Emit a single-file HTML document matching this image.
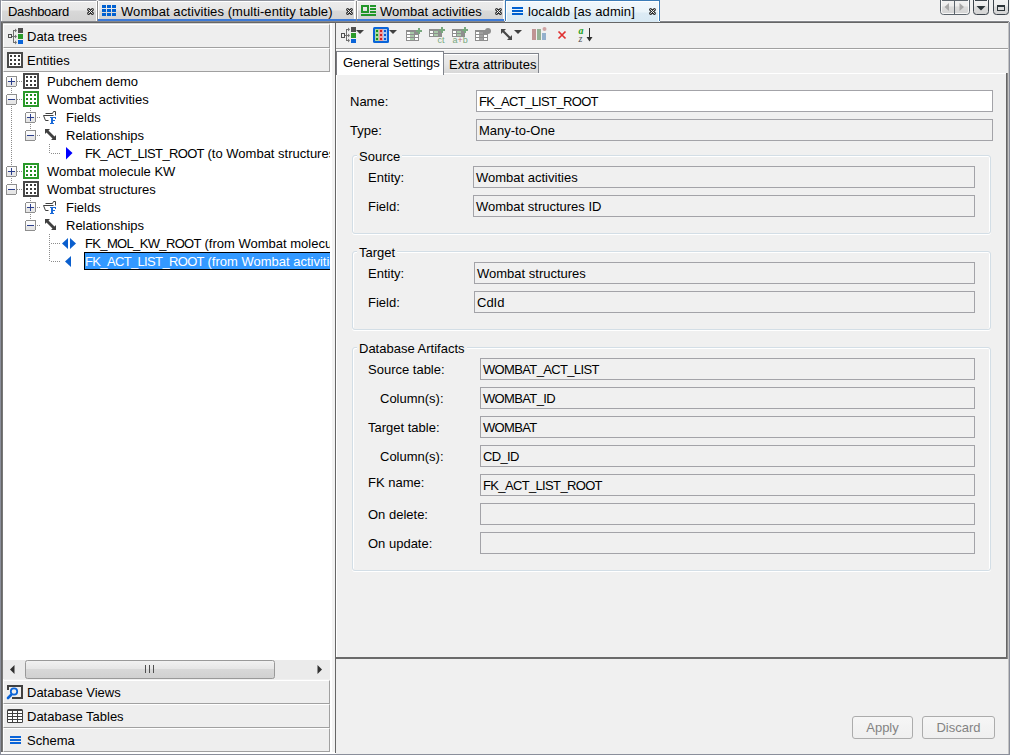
<!DOCTYPE html>
<html><head><meta charset="utf-8">
<style>
*{box-sizing:border-box}
html,body{margin:0;padding:0}
body{width:1010px;height:755px;overflow:hidden;position:relative;background:#f0f0f0;font-family:"Liberation Sans",sans-serif;font-size:13px;color:#000}
.a{position:absolute}
.t{position:absolute;line-height:13px;white-space:nowrap}
.cap{letter-spacing:-0.65px}
/* tabs */
.tab{position:absolute;top:0;height:21px;border-top:1px solid #8e929c;border-left:1px solid #fff;border-right:1px solid #fff;background:linear-gradient(#ececec 0,#e8e8e8 9px,#d8d8d8 10px,#d2d2d2 100%)}
.tab:before{content:"";position:absolute;left:0;top:0;right:0;height:1px;background:#fff}
.sep{position:absolute;top:1px;height:20px;width:1px;background:#8c8c8c}
.sepw{position:absolute;top:1px;height:20px;width:1px;background:#fff}
.uline{position:absolute;top:19px;height:2px;background:#3c7ad8}
.hdr{position:absolute;left:3px;width:327px;height:24px;background:#eeeeee;border-top:1px solid #fff;border-left:1px solid #fff;border-right:1px solid #a0a0a0;border-bottom:1px solid #a0a0a0}
.fld{position:absolute;height:22px;border:1px solid #a3a3a8;background:#f0f0f0}
.fld > span{position:absolute;left:2px;top:4px;line-height:13px;white-space:nowrap}
.grp{position:absolute;border:1px solid #d3dee6;border-radius:3px;box-shadow:inset 1px 1px 0 #fff, inset -1px 0 0 #fff, 0 1px 0 #fff}
.gt{position:absolute;background:#f0f0f0;padding:0 2px;line-height:13px}
.box{position:absolute;width:11px;height:11px;border:1px solid #8e8f8f;border-radius:2px;background:linear-gradient(#fdfdfd,#e8e8e8)}
.dh{position:absolute;height:1px;background-image:linear-gradient(90deg,#a0a0a0 50%,transparent 50%);background-size:2px 1px}
.dv{position:absolute;width:1px;background-image:linear-gradient(#a0a0a0 50%,transparent 50%);background-size:1px 2px}
.btn{position:absolute;height:23px;border:1px solid #acacac;border-radius:3px;background:linear-gradient(#f6f6f6,#efefef);color:#838383;text-align:center;line-height:21px}
</style></head><body>

<!-- ================= TAB BAR ================= -->
<div class="tab" style="left:1px;width:96px"></div>
<div class="tab" style="left:98px;width:257px"></div>
<div class="tab" style="left:357px;width:147px"></div>
<div class="a" style="left:505px;top:0;width:155px;height:22px;border:1px solid #3b7cb8;border-bottom:none;background:#fff;padding:1px 1px 0 1px"><div style="width:100%;height:100%;background:linear-gradient(#f0f7fc 0,#eaf4fa 10px,#dcebf5 11px,#d8e9f4 100%)"></div></div>
<div class="sep" style="left:97px"></div>
<div class="sep" style="left:356px"></div>
<div class="uline" style="left:98px;width:258px"></div>
<div class="uline" style="left:357px;width:147px"></div>
<div class="a" style="left:660px;top:20px;width:349px;height:1px;background:#f8f8f8"></div>
<div class="a" style="left:0;top:21px;width:1009px;height:1px;background:#85878c"></div>
<div class="a" style="left:0;top:22px;width:1009px;height:1px;background:#666"></div>
<div class="a" style="left:505px;top:21px;width:155px;height:1px;background:#d8e9f4;border-left:1px solid #fff;border-right:1px solid #fff"></div>

<div class="t" style="left:8px;top:5px;letter-spacing:-0.3px">Dashboard</div>
<div class="t" style="left:121px;top:5px;letter-spacing:0.08px">Wombat activities (multi-entity table)</div>
<div class="t" style="left:380px;top:5px">Wombat activities</div>
<div class="t" style="left:528px;top:5px;letter-spacing:0.12px">localdb [as admin]</div>

<!-- ================= LEFT PANEL ================= -->
<div class="a" style="left:1px;top:22px;width:2px;height:731px;background:linear-gradient(90deg,#666 50%,#777 50%)"></div>
<div class="a" style="left:3px;top:23px;width:1px;height:730px;background:#fff"></div>
<div class="a" style="left:3px;top:23px;width:332px;height:1px;background:#d4d4d4"></div>
<div class="a" style="left:3px;top:72px;width:329px;height:588px;background:#fff"></div>
<div class="a" style="left:330px;top:23px;width:2px;height:730px;background:#fff"></div>
<div class="a" style="left:332px;top:23px;width:3px;height:730px;background:#f3f3f3"></div>
<div class="a" style="left:1px;top:752px;width:335px;height:2px;background:#fff"></div>
<div class="hdr" style="top:24px"></div>
<div class="hdr" style="top:48px"></div>
<div class="t" style="left:27px;top:30px">Data trees</div>
<div class="t" style="left:27px;top:54px">Entities</div>

<!-- tree -->
<svg class="a" style="left:0;top:0" width="1010" height="755" shape-rendering="crispEdges">
<defs>
 <g id="bbase"><rect x="0.5" y="0.5" width="10" height="10" rx="1.5" fill="url(#bgrad)" stroke="#8e8e8e"/></g>
 <linearGradient id="bgrad" x1="0" y1="0" x2="0" y2="1"><stop offset="0" stop-color="#fdfdfd"/><stop offset="0.5" stop-color="#f8f8f8"/><stop offset="0.5" stop-color="#e9e9e9"/><stop offset="1" stop-color="#e4e4e4"/></linearGradient>
 <g id="bplus"><use href="#bbase"/><rect x="2" y="5" width="7" height="1" fill="#2c3f8c"/><rect x="5" y="2" width="1" height="7" fill="#2c3f8c"/></g>
 <g id="bminus"><use href="#bbase"/><rect x="2" y="5" width="7" height="1" fill="#2c3f8c"/></g>
 <g id="dots"><rect x="3" y="3" width="2" height="2"/><rect x="7" y="3" width="2" height="2"/><rect x="11" y="3" width="2" height="2"/><rect x="3" y="7" width="2" height="2"/><rect x="7" y="7" width="2" height="2"/><rect x="11" y="7" width="2" height="2"/><rect x="3" y="11" width="2" height="2"/><rect x="7" y="11" width="2" height="2"/><rect x="11" y="11" width="2" height="2"/></g>
 <g id="entd"><rect x="1" y="1" width="14" height="14" fill="#fff" stroke="#484848" stroke-width="2"/><use href="#dots" fill="#3c3c3c"/></g>
 <g id="entg"><rect x="1" y="1" width="14" height="14" fill="#fff" stroke="#2a9a2a" stroke-width="2"/><use href="#dots" fill="#1f8f1f"/></g>
 <g id="fields"><path d="M9.5 4.5 L10.5 2.5 H12.5 V6.5 M2.5 4.5 H9.5 M0.5 6.5 H10.5 M0.5 6.5 L2.5 11.5 H5.5" fill="none" stroke="#404040" shape-rendering="auto"/>
   <g fill="#1a6ad8"><rect x="7" y="8" width="6" height="1"/><rect x="8" y="8" width="2" height="7"/><rect x="10" y="11" width="2" height="1"/><rect x="7" y="14" width="4" height="1"/><rect x="12" y="9" width="1" height="1"/></g></g>
 <g id="rel"><path d="M2 2 L7 2 L5.5 3.5 L11.5 9.5 L13 8 L13 13 L8 13 L9.5 11.5 L3.5 5.5 L2 7 Z" fill="#404040" shape-rendering="auto"/></g>
</defs>
<rect x="11" y="88" width="1" height="1" fill="#8c8c8c"/>
<rect x="11" y="90" width="1" height="1" fill="#8c8c8c"/>
<rect x="11" y="92" width="1" height="1" fill="#8c8c8c"/>
<rect x="11" y="94" width="1" height="1" fill="#8c8c8c"/>
<rect x="11" y="96" width="1" height="1" fill="#8c8c8c"/>
<rect x="11" y="98" width="1" height="1" fill="#8c8c8c"/>
<rect x="11" y="100" width="1" height="1" fill="#8c8c8c"/>
<rect x="11" y="102" width="1" height="1" fill="#8c8c8c"/>
<rect x="11" y="104" width="1" height="1" fill="#8c8c8c"/>
<rect x="11" y="106" width="1" height="1" fill="#8c8c8c"/>
<rect x="11" y="108" width="1" height="1" fill="#8c8c8c"/>
<rect x="11" y="110" width="1" height="1" fill="#8c8c8c"/>
<rect x="11" y="112" width="1" height="1" fill="#8c8c8c"/>
<rect x="11" y="114" width="1" height="1" fill="#8c8c8c"/>
<rect x="11" y="116" width="1" height="1" fill="#8c8c8c"/>
<rect x="11" y="118" width="1" height="1" fill="#8c8c8c"/>
<rect x="11" y="120" width="1" height="1" fill="#8c8c8c"/>
<rect x="11" y="122" width="1" height="1" fill="#8c8c8c"/>
<rect x="11" y="124" width="1" height="1" fill="#8c8c8c"/>
<rect x="11" y="126" width="1" height="1" fill="#8c8c8c"/>
<rect x="11" y="128" width="1" height="1" fill="#8c8c8c"/>
<rect x="11" y="130" width="1" height="1" fill="#8c8c8c"/>
<rect x="11" y="132" width="1" height="1" fill="#8c8c8c"/>
<rect x="11" y="134" width="1" height="1" fill="#8c8c8c"/>
<rect x="11" y="136" width="1" height="1" fill="#8c8c8c"/>
<rect x="11" y="138" width="1" height="1" fill="#8c8c8c"/>
<rect x="11" y="140" width="1" height="1" fill="#8c8c8c"/>
<rect x="11" y="142" width="1" height="1" fill="#8c8c8c"/>
<rect x="11" y="144" width="1" height="1" fill="#8c8c8c"/>
<rect x="11" y="146" width="1" height="1" fill="#8c8c8c"/>
<rect x="11" y="148" width="1" height="1" fill="#8c8c8c"/>
<rect x="11" y="150" width="1" height="1" fill="#8c8c8c"/>
<rect x="11" y="152" width="1" height="1" fill="#8c8c8c"/>
<rect x="11" y="154" width="1" height="1" fill="#8c8c8c"/>
<rect x="11" y="156" width="1" height="1" fill="#8c8c8c"/>
<rect x="11" y="158" width="1" height="1" fill="#8c8c8c"/>
<rect x="11" y="160" width="1" height="1" fill="#8c8c8c"/>
<rect x="11" y="162" width="1" height="1" fill="#8c8c8c"/>
<rect x="11" y="164" width="1" height="1" fill="#8c8c8c"/>
<rect x="11" y="166" width="1" height="1" fill="#8c8c8c"/>
<rect x="11" y="168" width="1" height="1" fill="#8c8c8c"/>
<rect x="11" y="170" width="1" height="1" fill="#8c8c8c"/>
<rect x="11" y="172" width="1" height="1" fill="#8c8c8c"/>
<rect x="11" y="174" width="1" height="1" fill="#8c8c8c"/>
<rect x="11" y="176" width="1" height="1" fill="#8c8c8c"/>
<rect x="11" y="178" width="1" height="1" fill="#8c8c8c"/>
<rect x="11" y="180" width="1" height="1" fill="#8c8c8c"/>
<rect x="11" y="182" width="1" height="1" fill="#8c8c8c"/>
<rect x="30" y="108" width="1" height="1" fill="#8c8c8c"/>
<rect x="30" y="110" width="1" height="1" fill="#8c8c8c"/>
<rect x="30" y="112" width="1" height="1" fill="#8c8c8c"/>
<rect x="30" y="114" width="1" height="1" fill="#8c8c8c"/>
<rect x="30" y="116" width="1" height="1" fill="#8c8c8c"/>
<rect x="30" y="118" width="1" height="1" fill="#8c8c8c"/>
<rect x="30" y="120" width="1" height="1" fill="#8c8c8c"/>
<rect x="30" y="122" width="1" height="1" fill="#8c8c8c"/>
<rect x="30" y="124" width="1" height="1" fill="#8c8c8c"/>
<rect x="30" y="126" width="1" height="1" fill="#8c8c8c"/>
<rect x="30" y="128" width="1" height="1" fill="#8c8c8c"/>
<rect x="30" y="198" width="1" height="1" fill="#8c8c8c"/>
<rect x="30" y="200" width="1" height="1" fill="#8c8c8c"/>
<rect x="30" y="202" width="1" height="1" fill="#8c8c8c"/>
<rect x="30" y="204" width="1" height="1" fill="#8c8c8c"/>
<rect x="30" y="206" width="1" height="1" fill="#8c8c8c"/>
<rect x="30" y="208" width="1" height="1" fill="#8c8c8c"/>
<rect x="30" y="210" width="1" height="1" fill="#8c8c8c"/>
<rect x="30" y="212" width="1" height="1" fill="#8c8c8c"/>
<rect x="30" y="214" width="1" height="1" fill="#8c8c8c"/>
<rect x="30" y="216" width="1" height="1" fill="#8c8c8c"/>
<rect x="30" y="218" width="1" height="1" fill="#8c8c8c"/>
<rect x="49" y="144" width="1" height="1" fill="#8c8c8c"/>
<rect x="49" y="146" width="1" height="1" fill="#8c8c8c"/>
<rect x="49" y="148" width="1" height="1" fill="#8c8c8c"/>
<rect x="49" y="150" width="1" height="1" fill="#8c8c8c"/>
<rect x="49" y="152" width="1" height="1" fill="#8c8c8c"/>
<rect x="51" y="153" width="1" height="1" fill="#8c8c8c"/>
<rect x="53" y="153" width="1" height="1" fill="#8c8c8c"/>
<rect x="55" y="153" width="1" height="1" fill="#8c8c8c"/>
<rect x="57" y="153" width="1" height="1" fill="#8c8c8c"/>
<rect x="59" y="153" width="1" height="1" fill="#8c8c8c"/>
<rect x="49" y="234" width="1" height="1" fill="#8c8c8c"/>
<rect x="49" y="236" width="1" height="1" fill="#8c8c8c"/>
<rect x="49" y="238" width="1" height="1" fill="#8c8c8c"/>
<rect x="49" y="240" width="1" height="1" fill="#8c8c8c"/>
<rect x="49" y="242" width="1" height="1" fill="#8c8c8c"/>
<rect x="49" y="244" width="1" height="1" fill="#8c8c8c"/>
<rect x="49" y="246" width="1" height="1" fill="#8c8c8c"/>
<rect x="49" y="248" width="1" height="1" fill="#8c8c8c"/>
<rect x="49" y="250" width="1" height="1" fill="#8c8c8c"/>
<rect x="49" y="252" width="1" height="1" fill="#8c8c8c"/>
<rect x="49" y="254" width="1" height="1" fill="#8c8c8c"/>
<rect x="49" y="256" width="1" height="1" fill="#8c8c8c"/>
<rect x="49" y="258" width="1" height="1" fill="#8c8c8c"/>
<rect x="49" y="260" width="1" height="1" fill="#8c8c8c"/>
<rect x="51" y="243" width="1" height="1" fill="#8c8c8c"/>
<rect x="53" y="243" width="1" height="1" fill="#8c8c8c"/>
<rect x="55" y="243" width="1" height="1" fill="#8c8c8c"/>
<rect x="57" y="243" width="1" height="1" fill="#8c8c8c"/>
<rect x="59" y="243" width="1" height="1" fill="#8c8c8c"/>
<rect x="51" y="261" width="1" height="1" fill="#8c8c8c"/>
<rect x="53" y="261" width="1" height="1" fill="#8c8c8c"/>
<rect x="55" y="261" width="1" height="1" fill="#8c8c8c"/>
<rect x="57" y="261" width="1" height="1" fill="#8c8c8c"/>
<rect x="59" y="261" width="1" height="1" fill="#8c8c8c"/>
<rect x="17" y="81" width="1" height="1" fill="#8c8c8c"/>
<rect x="19" y="81" width="1" height="1" fill="#8c8c8c"/>
<rect x="21" y="81" width="1" height="1" fill="#8c8c8c"/>
<use href="#bplus" x="6" y="76"/>
<use href="#entd" x="23" y="73"/>
<rect x="17" y="99" width="1" height="1" fill="#8c8c8c"/>
<rect x="19" y="99" width="1" height="1" fill="#8c8c8c"/>
<rect x="21" y="99" width="1" height="1" fill="#8c8c8c"/>
<use href="#bminus" x="6" y="94"/>
<use href="#entg" x="23" y="91"/>
<rect x="17" y="171" width="1" height="1" fill="#8c8c8c"/>
<rect x="19" y="171" width="1" height="1" fill="#8c8c8c"/>
<rect x="21" y="171" width="1" height="1" fill="#8c8c8c"/>
<use href="#bplus" x="6" y="166"/>
<use href="#entg" x="23" y="163"/>
<rect x="17" y="189" width="1" height="1" fill="#8c8c8c"/>
<rect x="19" y="189" width="1" height="1" fill="#8c8c8c"/>
<rect x="21" y="189" width="1" height="1" fill="#8c8c8c"/>
<use href="#bminus" x="6" y="184"/>
<use href="#entd" x="23" y="181"/>
<rect x="37" y="117" width="1" height="1" fill="#8c8c8c"/>
<rect x="39" y="117" width="1" height="1" fill="#8c8c8c"/>
<use href="#bplus" x="25" y="112"/>
<use href="#fields" x="43" y="109"/>
<rect x="37" y="135" width="1" height="1" fill="#8c8c8c"/>
<rect x="39" y="135" width="1" height="1" fill="#8c8c8c"/>
<use href="#bminus" x="25" y="130"/>
<use href="#rel" x="43" y="127"/>
<rect x="37" y="207" width="1" height="1" fill="#8c8c8c"/>
<rect x="39" y="207" width="1" height="1" fill="#8c8c8c"/>
<use href="#bplus" x="25" y="202"/>
<use href="#fields" x="43" y="199"/>
<rect x="37" y="225" width="1" height="1" fill="#8c8c8c"/>
<rect x="39" y="225" width="1" height="1" fill="#8c8c8c"/>
<use href="#bminus" x="25" y="220"/>
<use href="#rel" x="43" y="217"/>

<!-- level2 icons -->
<path d="M66 147 L72.5 153 L66 159.5 Z" fill="#0000ff" shape-rendering="auto"/>
<path d="M62 243.5 L68 238 L68 249 Z M70 238 L76 243.5 L70 249 Z" fill="#0a5fce" shape-rendering="auto"/>
<path d="M65 261.5 L71 256 L71 267 Z" fill="#0a5fce" shape-rendering="auto"/>
</svg>
<div class="a" style="left:0;top:0;width:330px;height:660px;overflow:hidden">
<div class="t" style="left:47px;top:75px">Pubchem demo</div>
<div class="t" style="left:47px;top:93px">Wombat activities</div>
<div class="t" style="left:66px;top:111px">Fields</div>
<div class="t" style="left:66px;top:129px">Relationships</div>
<div class="t" style="left:85px;top:147px"><span class="cap">FK_ACT_LIST_ROOT</span> (to Wombat structures)</div>
<div class="t" style="left:47px;top:165px">Wombat molecule KW</div>
<div class="t" style="left:47px;top:183px">Wombat structures</div>
<div class="t" style="left:66px;top:201px">Fields</div>
<div class="t" style="left:66px;top:219px">Relationships</div>
<div class="t" style="left:85px;top:237px"><span class="cap">FK_MOL_KW_ROOT</span> (from Wombat molecule KW)</div>
<div class="a" style="left:84px;top:252px;width:260px;height:18px;border:1px solid #000;background:#3399ff"></div>
<div class="t" style="left:85px;top:255px;color:#fff"><span class="cap">FK_ACT_LIST_ROOT</span> (from Wombat activities)</div>
</div>


<div class="hdr" style="top:680px"></div>
<div class="hdr" style="top:704px"></div>
<div class="hdr" style="top:728px"></div>
<div class="t" style="left:27px;top:686px">Database Views</div>
<div class="t" style="left:27px;top:710px">Database Tables</div>
<div class="t" style="left:27px;top:734px">Schema</div>


<!-- splitter / right panel border -->
<div class="a" style="left:335px;top:22px;width:1px;height:731px;background:#666"></div>

<!-- ================= RIGHT PANEL ================= -->
<div class="a" style="left:1008px;top:22px;width:1px;height:732px;background:#c4c4c4"></div>
<div class="a" style="left:336px;top:48px;width:672px;height:1px;background:#a0a0a0"></div>
<div class="a" style="left:336px;top:49px;width:672px;height:1px;background:#fff"></div>

<!-- content tabs -->
<div class="a" style="left:336px;top:51px;width:108px;height:24px;border-top:1px solid #80848c;border-right:1px solid #80848c;border-left:1px solid #7a7a80;background:#fff"></div>
<div class="a" style="left:336px;top:75px;width:1px;height:582px;background:#fff"></div>
<div class="a" style="left:444px;top:53px;width:95px;height:20px;border-top:1px solid #80848c;border-right:1px solid #80848c;background:linear-gradient(#fff 0,#fff 1px,#ececec 1px,#e6e6e6 50%,#d8d8d8 100%)"></div>
<div class="t" style="left:343px;top:56px">General Settings</div>
<div class="t" style="left:449px;top:58px">Extra attributes</div>

<div class="a" style="left:444px;top:73px;width:563px;height:1px;background:#fff"></div>
<div class="a" style="left:1006px;top:73px;width:2px;height:586px;background:linear-gradient(90deg,#666 50%,#8c8c8c 50%)"></div>
<div class="a" style="left:336px;top:657px;width:671px;height:2px;background:#6a6a6a"></div>

<!-- form -->
<div class="t" style="left:350px;top:95px">Name:</div>
<div class="fld" style="left:476px;top:90px;width:517px;background:#fff"><span><span class="cap">FK_ACT_LIST_ROOT</span></span></div>
<div class="t" style="left:350px;top:124px">Type:</div>
<div class="fld" style="left:476px;top:119px;width:517px"><span>Many-to-One</span></div>

<div class="grp" style="left:352px;top:155px;width:639px;height:79px"></div>
<div class="gt" style="left:357px;top:150px">Source</div>
<div class="t" style="left:368px;top:171px">Entity:</div>
<div class="fld" style="left:473px;top:166px;width:502px"><span>Wombat activities</span></div>
<div class="t" style="left:368px;top:200px">Field:</div>
<div class="fld" style="left:473px;top:195px;width:502px"><span>Wombat structures ID</span></div>

<div class="grp" style="left:352px;top:251px;width:639px;height:79px"></div>
<div class="gt" style="left:357px;top:246px">Target</div>
<div class="t" style="left:368px;top:267px">Entity:</div>
<div class="fld" style="left:474px;top:262px;width:501px"><span>Wombat structures</span></div>
<div class="t" style="left:368px;top:296px">Field:</div>
<div class="fld" style="left:474px;top:291px;width:501px"><span>CdId</span></div>

<div class="grp" style="left:352px;top:347px;width:639px;height:224px"></div>
<div class="gt" style="left:357px;top:342px">Database Artifacts</div>
<div class="t" style="left:368px;top:363px">Source table:</div>
<div class="fld" style="left:480px;top:358px;width:495px"><span><span class="cap">WOMBAT_ACT_LIST</span></span></div>
<div class="t" style="left:380px;top:392px">Column(s):</div>
<div class="fld" style="left:480px;top:387px;width:495px"><span><span class="cap">WOMBAT_ID</span></span></div>
<div class="t" style="left:368px;top:421px">Target table:</div>
<div class="fld" style="left:480px;top:416px;width:495px"><span class="cap">WOMBAT</span></div>
<div class="t" style="left:380px;top:450px">Column(s):</div>
<div class="fld" style="left:480px;top:445px;width:495px"><span><span class="cap">CD_ID</span></span></div>
<div class="t" style="left:368px;top:476px">FK name:</div>
<div class="fld" style="left:480px;top:474px;width:495px"><span><span class="cap">FK_ACT_LIST_ROOT</span></span></div>
<div class="t" style="left:368px;top:508px">On delete:</div>
<div class="fld" style="left:480px;top:503px;width:495px"></div>
<div class="t" style="left:368px;top:537px">On update:</div>
<div class="fld" style="left:480px;top:532px;width:495px"></div>

<!-- ICONS -->
<svg class="a" style="left:0;top:0" width="1010" height="755" shape-rendering="crispEdges">
<defs>
 <g id="closex"><path d="M1.6 1.6 L5.4 5.4 M5.4 1.6 L1.6 5.4" stroke="#303030" stroke-width="3" stroke-linecap="round" fill="none" shape-rendering="auto"/><path d="M1.6 1.6 L5.4 5.4 M5.4 1.6 L1.6 5.4" stroke="#f0f0f0" stroke-width="1" stroke-linecap="round" fill="none" shape-rendering="auto"/></g>
 <g id="tbl"><rect x="0" y="0" width="13" height="11" rx="1" fill="#8e8e8e"/>
   <g fill="#fff"><rect x="1" y="2" width="3" height="2"/><rect x="1" y="5" width="3" height="2"/><rect x="1" y="8" width="3" height="2"/><rect x="9" y="5" width="3" height="2"/><rect x="9" y="8" width="3" height="2"/></g></g>
 <g id="gplus" fill="#78a87e"><rect x="2" y="0" width="2" height="6"/><rect x="0" y="2" width="6" height="2"/></g>
</defs>
<!-- tab icons -->
<g fill="#0060d0"><rect x="102" y="5" width="4" height="3"/><rect x="107" y="5" width="4" height="3"/><rect x="112" y="5" width="4" height="3"/>
<rect x="102" y="9" width="4" height="3"/><rect x="107" y="9" width="4" height="3"/><rect x="112" y="9" width="4" height="3"/>
<rect x="102" y="13" width="4" height="3"/><rect x="107" y="13" width="4" height="3"/><rect x="112" y="13" width="4" height="3"/></g>
<g fill="#22962a"><rect x="361" y="5" width="8" height="2"/><rect x="361" y="11" width="8" height="2"/><rect x="361" y="5" width="2" height="8"/><rect x="367" y="5" width="2" height="8"/>
<rect x="370" y="5" width="6" height="2"/><rect x="370" y="8" width="6" height="2"/><rect x="370" y="11" width="6" height="2"/><rect x="361" y="14" width="15" height="2"/></g>
<g fill="#0060d0"><rect x="512" y="7" width="11" height="2"/><rect x="512" y="10" width="11" height="2"/><rect x="512" y="13" width="11" height="2"/></g>
<use href="#closex" x="87" y="8"/>
<use href="#closex" x="346" y="8"/>
<use href="#closex" x="495" y="8"/>
<use href="#closex" x="649" y="8"/>

<!-- nav buttons -->
<rect x="940.5" y="-3.5" width="29" height="18" rx="3" fill="url(#navg)" stroke="#5c646c" shape-rendering="auto"/>
<rect x="941.5" y="0.5" width="27" height="13" rx="2" fill="none" stroke="#fff" stroke-opacity="0.8" shape-rendering="auto"/>
<rect x="954" y="0" width="1" height="14" fill="#5c646c"/>
<path d="M944.5 7 L949 3 L949 11 Z M959.5 3 L964 7 L959.5 11 Z" fill="#a8a8a8" shape-rendering="auto"/>
<rect x="973.5" y="-3.5" width="15" height="18" rx="3" fill="url(#navg)" stroke="#3c444c" shape-rendering="auto"/>
<path d="M976.5 6 L985.5 6 L981 10.5 Z" fill="#2c3438" shape-rendering="auto"/>
<rect x="942" y="0" width="26" height="1" fill="#5c646c"/><rect x="975" y="0" width="12" height="1" fill="#3c444c"/><rect x="995" y="0" width="12" height="1" fill="#3c444c"/>
<rect x="993.5" y="-3.5" width="15" height="18" rx="3" fill="url(#navg)" stroke="#3c444c" shape-rendering="auto"/>
<rect x="997.5" y="5.5" width="7" height="5" fill="none" stroke="#2c3438"/><rect x="998" y="6" width="6" height="1" fill="#2c3438"/>
<defs><linearGradient id="navg" x1="0" y1="0" x2="0" y2="1"><stop offset="0" stop-color="#f6f6f6"/><stop offset="0.55" stop-color="#ececec"/><stop offset="0.56" stop-color="#dcdcdc"/><stop offset="1" stop-color="#d4d4d4"/></linearGradient></defs>

<!-- left header icons -->
<g>
 <rect x="8.5" y="34.5" width="3" height="3" fill="none" stroke="#505050"/>
 <rect x="12" y="36" width="1" height="1" fill="#707070"/>
 <rect x="13" y="30" width="1" height="13" fill="#707070"/>
 <rect x="13" y="30" width="3" height="1" fill="#707070"/><rect x="13" y="36" width="3" height="1" fill="#707070"/><rect x="13" y="42" width="3" height="1" fill="#707070"/>
 <path d="M15 28.5 L17 30.5 L15 32.5 Z M15 34.5 L17 36.5 L15 38.5 Z M15 40.5 L17 42.5 L15 44.5 Z" fill="#707070" shape-rendering="auto"/>
 <rect x="18" y="28" width="5" height="5" fill="#505050"/><rect x="18" y="34" width="5" height="5" fill="#2a9a2a"/><rect x="18" y="40" width="5" height="4" fill="#0a64d8"/>
</g>
<use href="#entd" x="7" y="52"/>
<!-- DB views -->
<path d="M8 690 V686 H22 V698 H12" fill="none" stroke="#404040" stroke-width="2"/>
<circle cx="14" cy="691.5" r="3.2" fill="none" stroke="#0a64d8" stroke-width="1.8" shape-rendering="auto"/>
<path d="M11 695 L8 698" stroke="#0a64d8" stroke-width="2.6" stroke-linecap="round" shape-rendering="auto"/>
<!-- DB tables -->
<rect x="7" y="709" width="16" height="14" rx="1.5" fill="#404040" shape-rendering="auto"/>
<g fill="#fff"><rect x="8" y="711" width="4" height="2"/><rect x="13" y="711" width="4" height="2"/><rect x="18" y="711" width="4" height="2"/>
<rect x="8" y="714" width="4" height="2"/><rect x="13" y="714" width="4" height="2"/><rect x="18" y="714" width="4" height="2"/>
<rect x="8" y="717" width="4" height="2"/><rect x="13" y="717" width="4" height="2"/><rect x="18" y="717" width="4" height="2"/>
<rect x="8" y="720" width="4" height="2"/><rect x="13" y="720" width="4" height="2"/><rect x="18" y="720" width="4" height="2"/></g>
<!-- schema -->
<g fill="#0a64d8"><rect x="10" y="736" width="11" height="2"/><rect x="10" y="739" width="11" height="2"/><rect x="10" y="742" width="11" height="2"/></g>

<!-- toolbar -->
<g>
 <rect x="341.5" y="33.5" width="3" height="4" fill="none" stroke="#505050"/>
 <rect x="345" y="35" width="1" height="1" fill="#707070"/>
 <rect x="346" y="29" width="1" height="12" fill="#707070"/>
 <rect x="346" y="29" width="3" height="1" fill="#707070"/><rect x="346" y="35" width="3" height="1" fill="#707070"/><rect x="346" y="40" width="3" height="1" fill="#707070"/>
 <path d="M348 27.5 L350 29.5 L348 31.5 Z M348 33.5 L350 35.5 L348 37.5 Z M348 38.5 L350 40.5 L348 42.5 Z" fill="#707070" shape-rendering="auto"/>
 <rect x="351" y="27" width="5" height="5" fill="#505050"/><rect x="351" y="33" width="5" height="5" fill="#2a9a2a"/><rect x="351" y="39" width="5" height="4" fill="#0a64d8"/>
 <path d="M356 30 L364 30 L360 34 Z" fill="#404040" shape-rendering="auto"/>
</g>
<g>
 <rect x="373" y="27" width="16" height="16" rx="1.5" fill="#0a64d8" shape-rendering="auto"/>
 <rect x="375" y="29" width="4" height="12" fill="#a8d8a0"/><rect x="379" y="29" width="4" height="12" fill="#f0a0a0"/><rect x="383" y="29" width="4" height="12" fill="#a8c8f0"/>
 <g fill="#1a901a"><rect x="376" y="30" width="2" height="2"/><rect x="376" y="34" width="2" height="2"/><rect x="376" y="38" width="2" height="2"/></g>
 <g fill="#d02020"><rect x="380" y="30" width="2" height="2"/><rect x="380" y="34" width="2" height="2"/><rect x="380" y="38" width="2" height="2"/></g>
 <g fill="#0a58d0"><rect x="384" y="30" width="2" height="2"/><rect x="384" y="34" width="2" height="2"/><rect x="384" y="38" width="2" height="2"/></g>
 <path d="M389 30 L397 30 L393 34 Z" fill="#404040" shape-rendering="auto"/>
</g>
<!-- icon 3 -->
<use href="#tbl" x="406" y="30"/><rect x="410" y="32" width="4" height="2" fill="#a8c8a8"/><rect x="410" y="35" width="4" height="2" fill="#a8c8a8"/><rect x="410" y="38" width="4" height="2" fill="#a8c8a8"/>
<use href="#gplus" x="416" y="28"/>
<!-- icon 4 -->
<rect x="429" y="29" width="13" height="8" rx="1" fill="#8e8e8e"/><rect x="430" y="31" width="3" height="2" fill="#fff"/><rect x="430" y="34" width="3" height="2" fill="#fff"/><rect x="434" y="31" width="4" height="2" fill="#a8c8a8"/><rect x="434" y="34" width="4" height="2" fill="#a8c8a8"/>
<use href="#gplus" x="439" y="27"/>
<text x="437.5" y="43" font-family="Liberation Sans" font-size="9" fill="#78a87e" shape-rendering="auto">ct</text>
<!-- icon 5 -->
<rect x="452" y="29" width="13" height="8" rx="1" fill="#8e8e8e"/><rect x="453" y="31" width="3" height="2" fill="#fff"/><rect x="453" y="34" width="3" height="2" fill="#fff"/><rect x="457" y="31" width="4" height="2" fill="#a8c8a8"/><rect x="457" y="34" width="4" height="2" fill="#a8c8a8"/>
<use href="#gplus" x="462" y="27"/>
<text x="452.5" y="43" font-family="Liberation Sans" font-size="9" fill="#78a87e" shape-rendering="auto">a<tspan fill="#c07878">+</tspan>b</text>
<!-- icon 6 -->
<use href="#tbl" x="475" y="30"/><rect x="479" y="32" width="4" height="2" fill="#a0a0a0"/><rect x="479" y="35" width="4" height="2" fill="#a0a0a0"/><rect x="479" y="38" width="4" height="2" fill="#a0a0a0"/>
<circle cx="488" cy="31" r="3" fill="#8e8e8e" shape-rendering="auto"/>
<!-- icon 7 -->
<path d="M501 29 L506 29 L504.3 30.7 L510.3 36.7 L512 35 L512 40 L507 40 L508.7 38.3 L502.7 32.3 L501 34 Z" fill="#484848" shape-rendering="auto"/>
<path d="M514 30 L522 30 L518 34 Z" fill="#404040" shape-rendering="auto"/>
<!-- icon 8 -->
<rect x="532" y="29" width="4" height="11" fill="#c09494"/><rect x="537" y="29" width="4" height="11" fill="#94b094"/><rect x="542" y="33" width="4" height="7" fill="#94b0cc"/>
<circle cx="544.5" cy="29" r="2" fill="#d0a4a4" shape-rendering="auto"/>
<!-- icon 9 -->
<path d="M558.5 31.5 L565.5 38.5 M565.5 31.5 L558.5 38.5" stroke="#e03030" stroke-width="1.7" shape-rendering="auto"/>
<!-- icon 10 -->
<text x="578.5" y="34" font-family="Liberation Serif" font-style="italic" font-weight="bold" font-size="10" fill="#22a022" shape-rendering="auto">a</text>
<text x="578.5" y="41.5" font-family="Liberation Serif" font-style="italic" font-size="10" fill="#505050" shape-rendering="auto">z</text>
<rect x="589" y="28" width="1" height="12" fill="#303030"/>
<path d="M586.5 37 L592.5 37 L589.5 41.5 Z" fill="#303030" shape-rendering="auto"/>

<!-- scrollbar -->
<rect x="3" y="660" width="327" height="19" fill="#ebebeb"/>
<path d="M10 669.5 L14.5 665 L14.5 674 Z" fill="#303030" shape-rendering="auto"/>
<path d="M322 669.5 L317.5 665 L317.5 674 Z" fill="#303030" shape-rendering="auto"/>
<rect x="25.5" y="660.5" width="249" height="18" rx="2" fill="url(#thumbg)" stroke="#999" shape-rendering="auto"/>
<g fill="#505050"><rect x="145" y="665" width="1" height="8"/><rect x="149" y="665" width="1" height="8"/><rect x="153" y="665" width="1" height="8"/></g>
<defs><linearGradient id="thumbg" x1="0" y1="0" x2="0" y2="1"><stop offset="0" stop-color="#f2f2f2"/><stop offset="0.45" stop-color="#e6e6e6"/><stop offset="0.5" stop-color="#d8d8d8"/><stop offset="1" stop-color="#d0d0d0"/></linearGradient></defs>
</svg>
<!-- /ICONS -->
<!-- buttons -->
<div class="btn" style="left:852px;top:716px;width:61px">Apply</div>
<div class="btn" style="left:922px;top:716px;width:73px">Discard</div>

<div class="a" style="left:0;top:0;width:1px;height:755px;background:#8a8e9a"></div>
<div class="a" style="left:1009px;top:22px;width:1px;height:733px;background:#8a8e9a"></div>
<div class="a" style="left:0;top:754px;width:1010px;height:1px;background:#8a8e9a"></div>
</body></html>
